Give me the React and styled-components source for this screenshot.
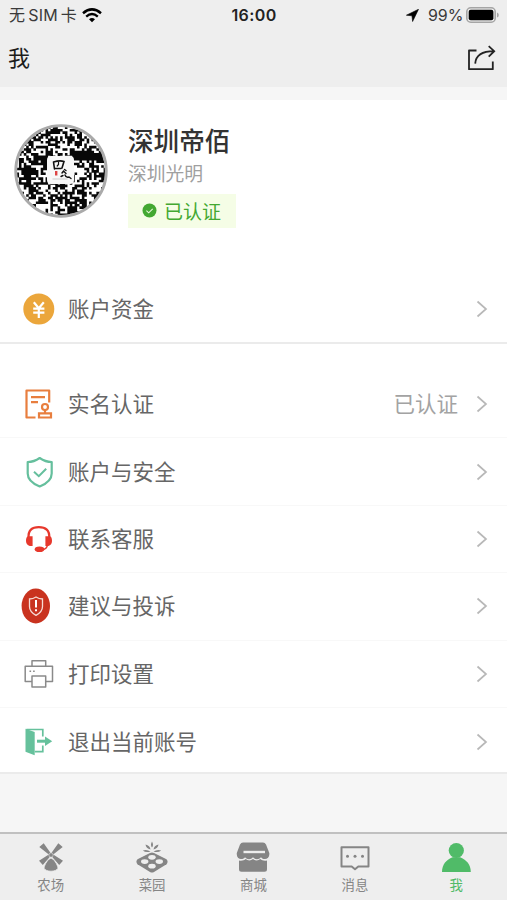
import React from "react";
import styled, { createGlobalStyle } from "styled-components";

const Global = createGlobalStyle`
  * { box-sizing: border-box; }
  body { margin: 0; background: #f6f6f6; font-family: "Noto Sans CJK SC", sans-serif; }
  svg { display: block; flex: none; }
`;

const Page = styled.div`
  width: 507px; height: 900px; display: flex; flex-direction: column;
  overflow: hidden; background: #f6f6f6;
`;
const Header = styled.header`
  height: 87px; flex: none; background: #eeeeee;
`;
const StatusBar = styled.div`
  height: 30px; display: grid; grid-template-columns: 1fr auto 1fr;
  align-items: center; padding: 0 8px 0 9px; color: #3a3a3a;
  font-family: Inter, "Noto Sans CJK SC", sans-serif; font-size: 16px; line-height: 30px;
`;
const Carrier = styled.div`
  display: flex; align-items: center; gap: 6px; letter-spacing: 0.2px;
`;
const CarrierName = styled.span`
  display: flex; gap: 3px; width: 67px; white-space: nowrap;
`;
const Clock = styled.div`
  font-weight: 600; font-size: 16px; letter-spacing: 0.4px; color: #222;
`;
const Power = styled.div`
  display: flex; align-items: center; justify-content: flex-end;
`;
const Percent = styled.span`
  margin: 0 3px 0 9px; width: 35px; letter-spacing: -0.1px; white-space: nowrap;
`;
const TitleBar = styled.div`
  height: 57px; display: flex; align-items: center; justify-content: space-between;
  padding: 0 11px 1px 8px;
`;
const Title = styled.h1`
  margin: 0; padding-bottom: 4px; font-size: 22px; line-height: 30px; font-weight: 400; color: #1c1c1c;
`;
const Content = styled.main`
  margin-top: 13px; height: 674px; flex: none; background: #fff;
  border-bottom: 2px solid #ebebeb;
`;
const Profile = styled.section`
  height: 175px; display: flex; padding: 23px 0 0 13px; gap: 19px;
`;
const Identity = styled.div`
  display: flex; flex-direction: column; align-items: flex-start;
`;
const Name = styled.div`
  font-size: 25.6px; line-height: 34px; font-weight: 500; color: #333;
`;
const Place = styled.div`
  font-size: 18.8px; line-height: 27px; margin-top: 2px; color: #a0a0a0;
`;
const Verified = styled.div`
  height: 34px; width: 108px; margin-top: 8px; display: flex; align-items: center;
  gap: 7px; padding: 0 0 1px 14px; background: #f5fde6; color: #43a832;
  font-size: 19px; line-height: 32px; white-space: nowrap;
`;
const FundsGroup = styled.section`
  height: 69px; border-bottom: 2px solid #ebebeb; margin-bottom: 27px;
`;
const Row = styled.div`
  height: 67.4px; display: flex; align-items: center; padding: 0 19px 0 20px;
  border-bottom: ${(p) => (p.$divided ? "1px solid #f8f8f8" : "none")};
`;
const IconSlot = styled.div`
  width: 48px; flex: none;
`;
const Label = styled.div`
  flex: 1; font-size: 21.5px; line-height: 32px; color: #666; padding-bottom: 2px;
`;
const Value = styled.div`
  font-size: 21.5px; line-height: 32px; color: #a3a3a3; margin-right: 18px; padding-bottom: 2px;
`;
const Tabs = styled.nav`
  margin-top: auto; height: 68px; flex: none; display: grid;
  grid-template-columns: repeat(5, 1fr); background: #eeeeee; border-top: 2px solid #c0c0c0;
`;
const Tab = styled.div`
  display: flex; flex-direction: column; align-items: center; padding-top: 6px;
  color: ${(p) => (p.$active ? "#50bb68" : "#858585")};
`;
const TabLabel = styled.span`
  font-size: 13.4px; line-height: 20px; margin-top: -2px;
`;

const Wifi = () => (
  <svg width="20" height="15" viewBox="0 0 20 15" fill="none" stroke="#000">
    <path d="M1 5.2Q10-2.4 19 5.2" strokeWidth="2.5" />
    <path d="M4.2 8.6Q10 3.6 15.8 8.6" strokeWidth="2.4" />
    <path d="M10 14.3 7 11.2Q10 8.8 13 11.2Z" fill="#000" stroke="none" />
  </svg>
);
const LocationArrow = () => (
  <svg width="13" height="13" viewBox="0 0 13 13"><path d="M12.5.3.4 6.2 6 6.8 6.6 12.5Z" fill="#000" stroke="#000" strokeWidth=".6" strokeLinejoin="round" /></svg>
);
const Battery = () => (
  <svg width="33" height="16" viewBox="0 0 33 16">
    <rect x=".8" y=".8" width="28.4" height="14.4" rx="4" fill="none" stroke="#a5a5a5" strokeWidth="1.6" />
    <rect x="2.7" y="2.8" width="24.7" height="10.4" rx="2" fill="#000" />
    <path d="M31 5.4q1.8.5 1.8 2.6T31 10.6Z" fill="#a5a5a5" />
  </svg>
);
const Share = () => (
  <svg width="28" height="26" viewBox="0 0 28 26" fill="none" stroke="#222" strokeWidth="1.8">
    <path d="M8.5 5.500H1v18.700h23.800v-7.600" strokeLinejoin="round" />
    <path d="M7.200 18.600C7.800 10.400 14 6.200 26 6.200M20.700 1.200l5.500 5-5.500 5.500" />
  </svg>
);
const Chevron = () => (
  <svg width="12" height="18" viewBox="0 0 12 18" fill="none" stroke="#b8b8b8" strokeWidth="1.7"><path d="M1.500 1.500 10 9l-8.500 7.500" /></svg>
);

// Deterministic modules for the circular code avatar.
const MODULES = (() => {
  let seed = 8317;
  const rand = () => {
    seed = (seed * 1664525 + 1013904223) >>> 0;
    return seed / 4294967296;
  };
  let d = "";
  for (let y = 0; y < 37; y++)
    for (let x = 0; x < 37; x++) {
      const dense =
        (x > 22 && x < 30 && y > 9 && y < 14) ||
        (x > 29 && x < 35 && y > 10 && y < 14) ||
        (x > 1 && x < 6 && y > 16 && y < 22) ||
        (x > 9 && x < 13 && y > 11 && y < 16);
      if (rand() < (dense ? 0.96 : 0.52)) d += `M${x} ${y}h1.06v1.06h-1.06z`;
    }
  return d;
})();
const Avatar = () => (
  <svg width="96" height="96" viewBox="0 0 96 96">
    <defs><clipPath id="round"><circle cx="48" cy="48" r="44.5" /></clipPath></defs>
    <circle cx="48" cy="48" r="44.5" fill="#fff" />
    <g clipPath="url(#round)"><path transform="translate(3.500 3.500) scale(2.420)" d={MODULES} fill="#080808" /></g>
    <circle cx="48" cy="48" r="45.300" fill="none" stroke="#aaa" strokeWidth="2.800" />
    <rect x="34" y="33" width="27" height="28" rx="4" fill="#f8f8f8" />
    <g fill="none" stroke="#111" strokeLinecap="round">
      <path d="M40.500 39 41.500 46M40.500 39Q47 37 51 38.500L49 45M42 45.500h6" strokeWidth="1.600" />
      <path d="M45.500 39v2.500l-1.300 1.500" strokeWidth="1.200" />
      <path d="m51.500 46.500 1.500 1M49 50l1.500-2 2.500 2.500M48 53.500l2-1M52 52q1 3 4 2l2 1.500" strokeWidth="1.400" />
    </g>
    <rect x="42" y="48" width="2.400" height="4.500" fill="#d44" />
    <path d="M39.500 56h15" stroke="#ccc" />
  </svg>
);
const CheckDot = () => (
  <svg width="15" height="15" viewBox="0 0 15 15"><circle cx="7.500" cy="7.500" r="7" fill="#43a832" /><path d="m4.400 7.600 2.300 2.200 4-4" fill="none" stroke="#e8f6da" strokeWidth="1.100" /></svg>
);

const MenuSvg = ({ children }) => <svg width="38" height="38" viewBox="0 0 38 38" fill="none">{children}</svg>;
const Yen = () => (
  <MenuSvg>
    <circle cx="18.800" cy="19" r="15.500" fill="#eba63b" />
    <path d="m13.800 12.200 5 6 5-6M18.800 18v10M13.200 18.700h11.200M13.200 22.700h11.200" stroke="#fff" strokeWidth="2.200" />
  </MenuSvg>
);
const Certificate = () => (
  <MenuSvg>
    <g stroke="#e87e3e" strokeWidth="2.200">
      <path d="M15.500 32.500H6.500v-27h22.700v12" strokeLinejoin="round" />
      <path d="M11 12.200h14M11 17.200h7" />
      <circle cx="25" cy="22" r="3" /><path d="M25 25v4M19 28.300h12v4.200H19Z" />
    </g>
  </MenuSvg>
);
const SafeShield = () => (
  <MenuSvg>
    <path d="M19.700 5q5.700 4 12 4v11.500c0 6.400-5 10.200-12 13-7-2.800-12-6.600-12-13V9q6.300 0 12-4Z" stroke="#65bf9d" strokeWidth="2.200" strokeLinejoin="round" />
    <path d="m14 18.800 4.800 4.400 7.400-7.500" stroke="#65bf9d" strokeWidth="2" />
  </MenuSvg>
);
const Headset = () => (
  <MenuSvg>
    <path d="M8.600 18C8 10 12 7.200 18.800 7.200S29.800 10 29.200 18" stroke="#e7382c" strokeWidth="2.300" />
    <path d="M8 16.300h4.600V26H9.800C7.500 25.600 6 23.800 6 21.100s.7-4.400 2-4.800ZM30 16.300h-4.600V26h3c2.300-.4 3.600-2.200 3.600-4.900s-.7-4.400-2-4.800Z" fill="#e7382c" />
    <path d="M27.500 25c-.5 3-2.200 4.300-5 4.500" stroke="#e7382c" strokeWidth="1.500" />
    <ellipse cx="19.500" cy="29.300" rx="4.800" ry="2.800" fill="#e7382c" />
  </MenuSvg>
);
const WarningShield = () => (
  <MenuSvg>
    <ellipse cx="15.800" cy="19" rx="14.200" ry="17.500" fill="#c9331f" />
    <path d="M16 10q3 2 6.500 2v7.500c0 4.200-2.500 6.700-6.500 8.800-4-2.100-6.500-4.600-6.500-8.800V12q3.500 0 6.500-2Z" stroke="#f6dcd5" strokeWidth="1.300" />
    <path d="M16 13v7.400M16 22.200v2" stroke="#fff" strokeWidth="2" />
  </MenuSvg>
);
const Printer = () => (
  <MenuSvg>
    <g stroke="#8a8a8a" strokeWidth="1.500" strokeLinejoin="round">
      <path d="M12 11.200V5.800h13.700v5.400M12 26.500H5.200V11.200h27.300v15.300h-6.800" />
      <path d="M12 21h13.700v11H12Z" /><path d="M9.500 16.200h1.600m2 0h1.600" />
    </g>
  </MenuSvg>
);
const Exit = () => (
  <MenuSvg>
    <path d="M5.500 5.800 14.700 9v23.200L5.500 28.800Z" fill="#66c19c" />
    <path d="M6.400 6.500h16.400v7M22.800 22.500v6.200h-8" stroke="#66c19c" strokeWidth="1.700" />
    <path d="M17 18.200h9" stroke="#66c19c" strokeWidth="3" /><path d="m25 13.400 7.200 4.800-7.200 4.800Z" fill="#66c19c" />
  </MenuSvg>
);

const TabSvg = ({ children }) => <svg width="38" height="36" viewBox="0 0 38 36" fill="currentColor">{children}</svg>;
const Windmill = () => (
  <TabSvg>
    <path d="M7.300 7 11.700 3.300 18.600 13 16.800 14.500ZM30.700 7 26.300 3.300 19.400 13l1.800 1.500ZM7 20.800 16.800 14.600l1.600 1.600L10.800 25ZM31 20.800l-9.800-6.200-1.600 1.600L27.200 25Z" />
    <circle cx="19" cy="15" r="2.200" stroke="#eee" strokeWidth=".5" />
    <path d="M19 18.200c2.200 0 6.600 6 7 10-1.600 4-12.400 4-14 0C12.400 24.200 16.800 18.200 19 18.200Z" stroke="#eee" strokeWidth=".8" />
  </TabSvg>
);
const Garden = () => (
  <TabSvg>
    <path d="M19 7.500Q17 5 19 1.500q2 3.500 0 6ZM17.500 9.500Q13 8.500 12.500 4.500q4.500 1 5 5ZM20.500 9.500Q25 8.500 25.500 4.500q-4.500 1-5 5ZM17.500 11.500Q13 13 9.800 10.500q4-1.500 7.700 1ZM20.500 11.500q4.500 1.500 7.700-1-4-1.500-7.700 1Z" />
    <path d="M17 13q2-1 4 0L33.500 19.300q2.200 2.200 0 5L21 32q-2 1-4 0L4.500 24.300q-2.200-2.800 0-5Z" />
    <g fill="#eee"><ellipse cx="19" cy="17.300" rx="3.700" ry="2.400" /><ellipse cx="11.700" cy="21.600" rx="3.700" ry="2.400" /><ellipse cx="26.300" cy="21.600" rx="3.700" ry="2.400" /><ellipse cx="19" cy="26.200" rx="3.700" ry="2.400" /></g>
  </TabSvg>
);
const Store = () => (
  <TabSvg>
    <path d="M9 2.500h20q2 0 3 2l3.300 8.500c.5 4-1.800 6-4.300 6-2.300 0-3.500-1-4-1.800-2 2.600-6 2.600-8 0-2 2.600-6 2.600-8 0-.7 1.100-1.800 1.800-4 1.800-2.500 0-4.600-2-4.200-6L6 4.500q1-2 3-2Z" />
    <path d="M9.500 12h21.500" stroke="#eee" strokeWidth="2.400" />
    <path d="M5 20.500c3 .5 5-.1 6.700-1.500 2 1.700 5 2 7.300 0 2.300 2 5.300 1.700 7.300 0 1.700 1.400 3.700 2 6.700 1.500v8.800q0 2.500-2.500 2.500h-23Q5 31.800 5 29.300Z" />
  </TabSvg>
);
const Messages = () => (
  <TabSvg>
    <path d="M5.500 7.200h27v19.300H22.300L19 29.300l-3.300-2.800H5.500Z" fill="none" stroke="currentColor" strokeWidth="2" strokeLinejoin="round" />
    <circle cx="11.500" cy="16.300" r="1.500" /><circle cx="19" cy="16.300" r="1.500" /><circle cx="26.500" cy="16.300" r="1.500" />
  </TabSvg>
);
const Person = () => (
  <TabSvg><circle cx="19.300" cy="10.500" r="7.600" /><path d="M5 32c0-8 4.600-12.200 10.500-14.700h7.600C29 19.800 33.800 24 33.800 32Z" /></TabSvg>
);

const menu = [
  { label: "实名认证", Icon: Certificate, value: "已认证" },
  { label: "账户与安全", Icon: SafeShield },
  { label: "联系客服", Icon: Headset },
  { label: "建议与投诉", Icon: WarningShield },
  { label: "打印设置", Icon: Printer },
  { label: "退出当前账号", Icon: Exit },
];
const tabs = [
  { label: "农场", Icon: Windmill },
  { label: "菜园", Icon: Garden },
  { label: "商城", Icon: Store },
  { label: "消息", Icon: Messages },
  { label: "我", Icon: Person, active: true },
];

const MenuRow = ({ label, Icon, value, divided }) => (
  <Row $divided={divided}>
    <IconSlot><Icon /></IconSlot>
    <Label>{label}</Label>
    {value && <Value>{value}</Value>}
    <Chevron />
  </Row>
);

export default function App() {
  return (
    <Page>
      <Global />
      <Header>
        <StatusBar>
          <Carrier>
            <CarrierName><span>无</span><span>SIM</span><span>卡</span></CarrierName>
            <Wifi />
          </Carrier>
          <Clock>16:00</Clock>
          <Power><LocationArrow /><Percent>99%</Percent><Battery /></Power>
        </StatusBar>
        <TitleBar><Title>我</Title><Share /></TitleBar>
      </Header>
      <Content>
        <Profile>
          <Avatar />
          <Identity>
            <Name>深圳帝佰</Name>
            <Place>深圳光明</Place>
            <Verified><CheckDot />已认证</Verified>
          </Identity>
        </Profile>
        <FundsGroup><MenuRow label="账户资金" Icon={Yen} /></FundsGroup>
        {menu.map((item, i) => <MenuRow key={item.label} {...item} divided={i < menu.length - 1} />)}
      </Content>
      <Tabs>
        {tabs.map(({ label, Icon, active }) => (
          <Tab key={label} $active={active}><Icon /><TabLabel>{label}</TabLabel></Tab>
        ))}
      </Tabs>
    </Page>
  );
}
